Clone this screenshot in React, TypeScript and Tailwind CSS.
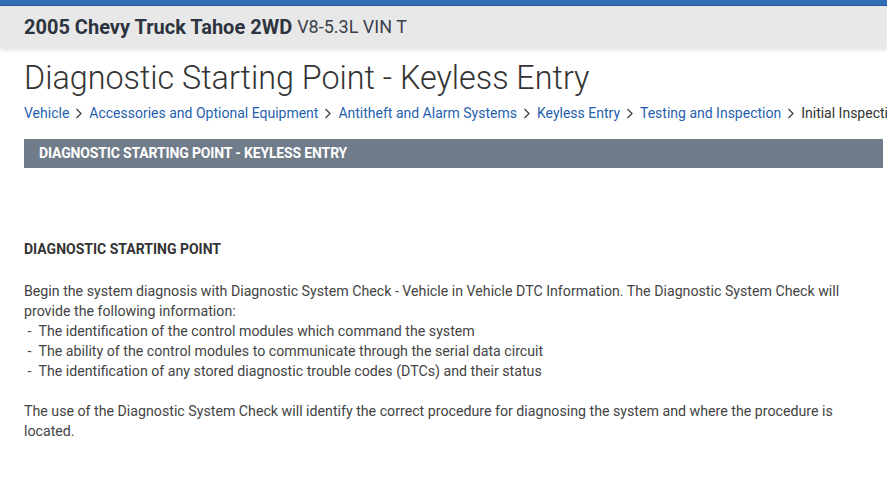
const crumbs = [
  "Vehicle",
  "Accessories and Optional Equipment",
  "Antitheft and Alarm Systems",
  "Keyless Entry",
  "Testing and Inspection",
];

function Chevron() {
  return (
    <svg width="8" height="11" viewBox="0 0 8 11" className="mx-[6px] shrink-0">
      <path d="M1.5 1 L6 5.5 L1.5 10" fill="none" stroke="#444" strokeWidth="1.3" />
    </svg>
  );
}

export default function App() {
  return (
    <div
      className="w-[887px] h-[483px] overflow-hidden bg-white text-[#333]"
      style={{ fontFamily: "Roboto, 'Liberation Sans', sans-serif" }}
    >
      <div className="h-[6px] bg-[#2f6db5] border-b border-[#275c9c]" />
      <div className="h-[41px] bg-[#e8e8e9] flex items-center px-6 shadow-[0_3px_4px_rgba(0,0,0,0.12)]">
        <span className="text-[20px] font-bold text-[#2d3440]">2005 Chevy Truck Tahoe 2WD</span>
        <span className="text-[18px] text-[#3a404a] ml-[5px]">V8-5.3L VIN T</span>
      </div>

      <div className="pl-6">
        <h1 className="mt-[11px] text-[32.3px] font-light leading-[40px] text-[#333] whitespace-nowrap">
          Diagnostic Starting Point - Keyless Entry
        </h1>
        <div className="mt-[5px] flex items-center text-[14px] leading-[20px] whitespace-nowrap overflow-hidden">
          {crumbs.map((c) => (
            <span key={c} className="flex items-center shrink-0">
              <span className="text-[#1f5fae]">{c}</span>
              <Chevron />
            </span>
          ))}
          <span className="text-[#333] shrink-0">Initial Inspection and Diagnostic Overview</span>
        </div>

        <div className="mt-[16px] mr-1 h-[29px] bg-[#717c8a] flex items-center px-[15px]">
          <span className="text-[14px] font-bold text-white tracking-[-0.15px]">
            DIAGNOSTIC STARTING POINT - KEYLESS ENTRY
          </span>
        </div>

        <div className="mt-[71px] text-[14px] font-bold text-[#333] leading-[20px]">
          DIAGNOSTIC STARTING POINT
        </div>

        <div className="mt-[22px] text-[14.2px] leading-[20px] text-[#444] pr-3">
          <p>
            Begin the system diagnosis with Diagnostic System Check - Vehicle in Vehicle DTC Information. The
            Diagnostic System Check will provide the following information:
          </p>
          <ul>
            <li>&nbsp;- &nbsp;The identification of the control modules which command the system</li>
            <li>&nbsp;- &nbsp;The ability of the control modules to communicate through the serial data circuit</li>
            <li>&nbsp;- &nbsp;The identification of any stored diagnostic trouble codes (DTCs) and their status</li>
          </ul>
          <p className="mt-[20px]">
            The use of the Diagnostic System Check will identify the correct procedure for diagnosing the system
            and where the procedure is located.
          </p>
        </div>
      </div>
    </div>
  );
}
